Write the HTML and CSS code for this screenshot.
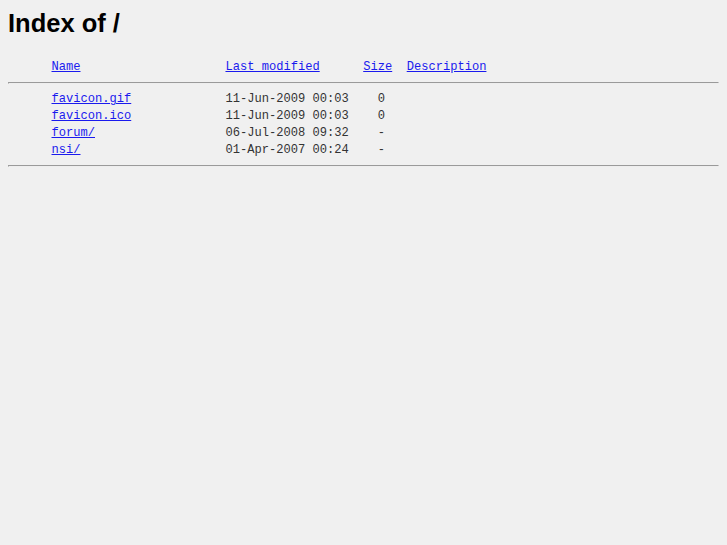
FILE: index.html
```html
<!DOCTYPE html>
<html>
<head>
    <meta charset="UTF-8">
    <title>Index of /</title>
    <link rel="stylesheet" href="styles.css">
</head>
<body>
<h1>Index of /</h1>
<pre class="listing">      <a href="?C=N;O=D">Name</a>                    <a href="?C=M;O=A">Last modified</a>      <a href="?C=S;O=A">Size</a>  <a href="?C=D;O=A">Description</a><hr>      <a href="favicon.gif">favicon.gif</a>             11-Jun-2009 00:03    0   
      <a href="favicon.ico">favicon.ico</a>             11-Jun-2009 00:03    0   
      <a href="forum/">forum/</a>                  06-Jul-2008 09:32    -   
      <a href="nsi/">nsi/</a>                    01-Apr-2007 00:24    -   
<hr></pre>
</body>
</html>
```

FILE: styles.css
```css
body {
    margin: 8px;
    background-color: #f0f0f0;
    color: #000;
}

h1 {
    font-family: "Liberation Sans", Arial, sans-serif;
    font-size: 25.5px;
    font-weight: bold;
    line-height: 30px;
    margin: 0 0 21px 0;
}

.listing {
    font-family: "Liberation Mono", "Courier New", monospace;
    font-size: 12.08px;
    line-height: 17px;
    margin: 0;
    color: #333;
}

.listing a {
    color: #1a1aee;
}

.listing hr {
    margin: 6px 0 7px 0;
}
```
